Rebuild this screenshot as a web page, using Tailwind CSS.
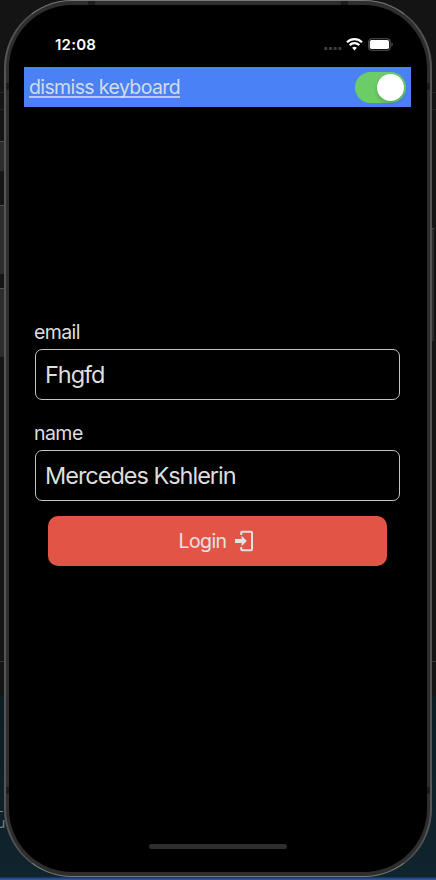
<!DOCTYPE html>
<html lang="en">
<head>
<meta charset="utf-8">
<title>Login</title>
<script src="https://cdn.jsdelivr.net/npm/@tailwindcss/browser@4"></script>
</head>
<body class="relative h-[880px] w-[436px] overflow-hidden bg-[#141414] font-[Inter,sans-serif]">
  <!-- desktop behind the device -->
  <div class="absolute inset-0">
    <div class="absolute inset-x-0 top-[92px] h-px bg-[#242424]"></div>
    <div class="absolute inset-x-0 top-[109px] h-px bg-[#242424]"></div>
    <div class="absolute inset-x-0 top-[661px] h-px bg-[#363636]"></div>
    <div class="absolute inset-x-0 top-[696px] h-[181px] bg-gradient-to-b from-[#0c1c23] to-[#10242d]"></div>
    <div class="absolute inset-x-0 top-[877px] h-[3px] bg-gradient-to-b from-[#1b2f55] to-[#2f60b0]"></div>
    <div class="absolute left-0 top-[811px] h-px w-[3px] bg-[#74848a]"></div>
    <div class="absolute -left-[3px] top-[815px] text-[14px] leading-[16px] text-[#74848a]">u</div>
    <div class="absolute left-0 top-[141px] h-[30px] w-[5px] border-t border-[#505050] bg-[#2c2c2c]"></div>
    <div class="absolute left-0 top-[205px] h-[69px] w-[5px] border-t border-[#505050] bg-[#2c2c2c]"></div>
    <div class="absolute left-0 top-[288px] h-[69px] w-[5px] border-t border-[#505050] bg-[#2c2c2c]"></div>
    <div class="absolute left-[431px] top-[228px] h-[113px] w-[3px] border-t border-[#505050] bg-[#2c2c2c]"></div>
  </div>

  <!-- device -->
  <div class="relative ml-1 h-[877px] w-[428px] rounded-[68px] border-x-2 border-y border-x-[#555] border-y-[#777] bg-[#2e2e2e] px-[3px] pt-1 pb-1">
    <div class="absolute left-[82px] top-0 h-1 w-[7px] bg-[#1c1c1c]"></div>
    <div class="absolute left-[335px] top-0 h-1 w-[7px] bg-[#1c1c1c]"></div>
    <div class="absolute left-0 top-[82px] h-[7px] w-[3px] bg-[#1c1c1c]"></div>
    <div class="absolute right-0 top-[82px] h-[7px] w-[3px] bg-[#1c1c1c]"></div>
    <div class="absolute left-0 top-[786px] h-[7px] w-[3px] bg-[#1c1c1c]"></div>
    <div class="absolute right-0 top-[786px] h-[7px] w-[3px] bg-[#1c1c1c]"></div>

    <main class="relative flex h-full flex-col rounded-[63px] bg-black pl-[15px] pr-4">
      <header class="flex h-[62px] items-start justify-between pl-[31px] pr-[17px] pt-[30px]">
        <span class="text-[15px] font-semibold leading-5 tracking-[0.25px] text-white">12:08</span>
        <svg class="mt-px" width="70" height="16" viewBox="0 0 70 16">
          <g fill="#3d3d3d"><rect x="0.2" y="10.9" width="3.2" height="3.2" rx=".8"/><rect x="4.9" y="10.9" width="3.2" height="3.2" rx=".8"/><rect x="9.6" y="10.9" width="3.2" height="3.2" rx=".8"/><rect x="14.3" y="10.9" width="3.2" height="3.2" rx=".8"/></g>
          <g fill="none" stroke="#fff" stroke-width="2.2"><path d="M23 6.2a10.7 10.7 0 0 1 15 0"/><path d="M25.7 9.1a6.8 6.8 0 0 1 9.6 0"/></g>
          <path d="M30.5 14.4l-2.4-2.6a3.5 3.5 0 0 1 4.8 0z" fill="#fff"/>
          <rect x="44.7" y="2.8" width="21.4" height="11.4" rx="3.2" fill="none" stroke="#555" stroke-width="1.1"/>
          <rect x="45.8" y="4" width="19.2" height="9" rx="1.8" fill="#fff"/>
          <path d="M67.4 6.6c2 .7 2 3.1 0 3.8z" fill="#555"/>
        </svg>
      </header>

      <div class="flex h-[40px] shrink-0 items-center justify-between bg-[#4a82f5] pl-[5px] pr-[5px]">
        <span class="text-[19.5px] font-[370] leading-[24px] tracking-[-0.62px] text-[#d3dcea] underline decoration-[#b9cbe8] decoration-[1.5px] underline-offset-2 [text-decoration-skip-ink:none]">dismiss keyboard</span>
        <span class="flex h-[31px] w-[51px] items-center justify-end rounded-full bg-[#6ccd68] p-[2px]">
          <span class="size-[27px] rounded-full bg-white shadow-[0_2px_4px_rgba(0,0,0,0.2)]"></span>
        </span>
      </div>

      <form class="flex flex-col px-[11px] pt-[212px]">
        <label class="-ml-px h-[30px] pt-px text-[19.5px] font-[370] leading-[25px] tracking-[-0.6px] text-[#dedede]"><span>email</span></label>
        <div class="flex h-[51px] items-center rounded-[7px] border border-[#c4c4c4] px-[9px] pt-px text-[23.5px] font-[370] tracking-[-1.02px] text-[#dedede]"><span>Fhgfd</span></div>
        <label class="-ml-px mt-5 h-[30px] pt-px text-[19.5px] font-[370] leading-[25px] tracking-[-0.55px] text-[#dedede]"><span>name</span></label>
        <div class="flex h-[51px] items-center rounded-[7px] border border-[#c4c4c4] px-[9px] pt-px text-[23.5px] font-[370] tracking-[-1.02px] text-[#dedede]"><span>Mercedes Kshlerin</span></div>
        <button type="button" class="mx-[13px] mt-[15px] flex h-[50px] items-center justify-center rounded-[10px] bg-[#e25546] pr-[2px] text-[19.5px] font-[370] tracking-[-0.55px] text-[#e2e2e2]">
          <span class="pt-px">Login</span>
          <svg class="ml-2" width="20" height="22" viewBox="0 0 20 22">
            <path d="M6.2 5V2.8a1 1 0 0 1 1-1h8.8a1 1 0 0 1 1 1v16.4a1 1 0 0 1-1 1H7.2a1 1 0 0 1-1-1v-2.2" fill="none" stroke="#e2e2e2" stroke-width="2"/>
            <path d="M0 9h6.6V5.8l5.2 5.2-5.2 5.2V13H0z" fill="#e2e2e2"/>
          </svg>
        </button>
      </form>

      <div class="mx-auto mt-auto mb-[23px] h-[5px] w-[138px] rounded-full bg-[#2f2f2f]"></div>
    </main>
  </div>
</body>
</html>
